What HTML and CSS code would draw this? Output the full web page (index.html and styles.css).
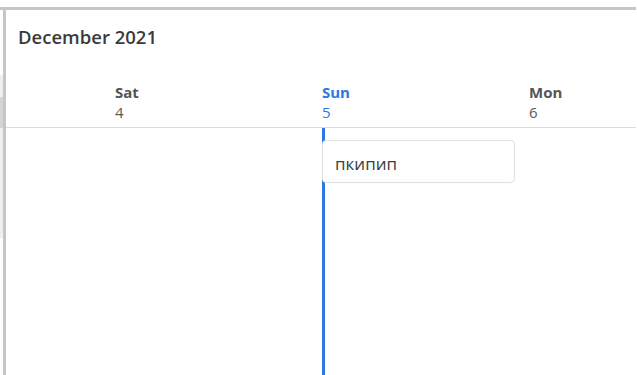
FILE: index.html
```html
<!DOCTYPE html>
<html lang="en">
<head>
<meta charset="utf-8">
<title>Calendar</title>
<link rel="stylesheet" href="styles.css">
</head>
<body>
<div class="frame">
  <div class="strip">
    <div class="strip-light"></div>
    <div class="strip-dark"></div>
    <div class="strip-light strip-light-long"></div>
  </div>
  <div class="main">
    <div class="title">December 2021</div>
    <div class="days">
      <div class="day"></div>
      <div class="day"><span class="dname">Sat</span><span class="dnum">4</span></div>
      <div class="day day-today"><span class="dname">Sun</span><span class="dnum">5</span></div>
      <div class="day"><span class="dname">Mon</span><span class="dnum">6</span></div>
    </div>
    <div class="grid">
      <div class="col"></div>
      <div class="col"></div>
      <div class="col col-today">
        <div class="event">пкипип</div>
      </div>
      <div class="col"></div>
    </div>
  </div>
</div>
</body>
</html>
```

FILE: styles.css
```css
html, body {
  margin: 0;
  padding: 0;
  background: #ffffff;
  overflow: hidden;
  height: 375px;
}
body {
  padding-top: 7px;
  box-sizing: border-box;
  font-family: "Open Sans", "Noto Sans", sans-serif;
  color: #333333;
}
.frame {
  width: 636px;
  height: 368px;
  border-top: 3px solid #c6c6c6;
  display: flex;
  box-sizing: border-box;
}
.strip {
  width: 3px;
  display: flex;
  flex-direction: column;
  padding-top: 65px;
}
.strip-light {
  height: 22px;
  background: #efefef;
}
.strip-dark {
  height: 31px;
  background: #d4d4d4;
}
.strip-light-long {
  height: 110px;
}
.main {
  flex: 1;
  border-left: 3px solid #c6c6c6;
  overflow: hidden;
  display: flex;
  flex-direction: column;
}
.title {
  padding: 15px 0 0 12px;
  font-size: 18.5px;
  line-height: 24px;
  font-weight: 600;
  color: #3a3a3a;
}
.days {
  display: grid;
  grid-template-columns: repeat(4, 207px);
  margin-left: -98px;
  margin-top: 33px;
  padding-bottom: 5px;
  border-bottom: 1px solid #dcdcdc;
  width: 1000px;
  height: 40px;
}
.day {
  display: flex;
  flex-direction: column;
  font-size: 15px;
  line-height: 20px;
  color: #555555;
}
.dname {
  font-weight: 700;
}
.dnum {
  color: #5a5a5a;
}
.day-today,
.day-today .dnum {
  color: #2b78e4;
}
.grid {
  flex: 1;
  display: grid;
  grid-template-columns: repeat(4, 207px);
  margin-left: -98px;
}
.col {
  position: relative;
}
.col-today::before {
  content: "";
  position: absolute;
  left: 0;
  top: 0;
  bottom: 0;
  width: 3px;
  background: #2b78e4;
}
.event {
  position: relative;
  margin-top: 12px;
  width: 193px;
  box-sizing: border-box;
  border: 1px solid #e0e0e0;
  border-radius: 4px;
  background: #ffffff;
  padding: 12px 0 7px 12px;
  font-size: 17px;
  line-height: 22px;
  color: #3c3c3c;
}
```
